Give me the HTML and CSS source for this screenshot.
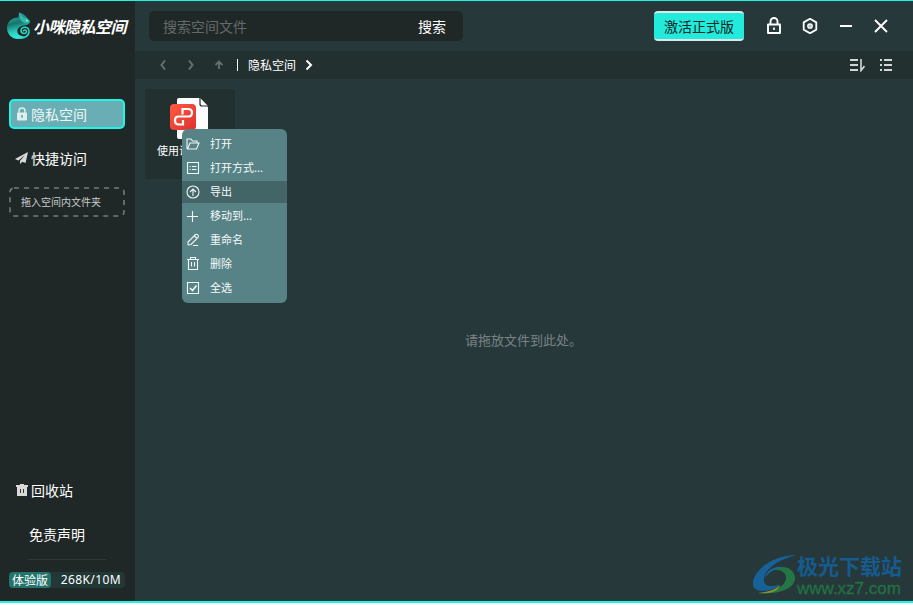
FILE: index.html
```html
<!DOCTYPE html>
<html lang="zh-CN">
<head>
<meta charset="utf-8">
<title>小咪隐私空间</title>
<link rel="stylesheet" href="styles.css">
</head>
<body>
<div class="window">
  <aside class="sidebar">
    <div class="brand">
      <svg class="brand-mark" width="24" height="28" viewBox="0 0 24 28">
        <defs><linearGradient id="g" gradientUnits="userSpaceOnUse" x1="6" y1="3" x2="12" y2="27"><stop offset="0" stop-color="#2aa99d"/><stop offset=".35" stop-color="#17756d"/><stop offset=".7" stop-color="#2bd2c2"/><stop offset="1" stop-color="#35f0dd"/></linearGradient></defs>
        <path fill="url(#g)" d="M11.500 5.500 12 .5c3 1 6 2.500 8 5l3.300 3.500c0 2-2 3.800-5 4.200-5 .3-8 2.800-8 6 0 2.500 2 4.500 5 4.800l2 1c-2 1.500-4 2-6 2C4.500 27 0 22 0 16 0 10 4.500 5.500 11.500 5.500z"/>
        <path d="M11 25.500c6 1.500 11-1.500 11-6 0-5-7.500-5.800-8-1 0 3.500 5.500 4 5.500 1 0-2.300-3.200-2-3 0" fill="none" stroke="#2bdccb" stroke-width="1.500"/>
        <path d="M12.500 2 16 5l4 1.500 3 3c-1 2-5 2.500-7.500.5-2-1.500-3-4-3-8z" fill="#2fb9ad"/>
        <circle cx="20" cy="8.500" r=".8" fill="#e8ffff"/>
      </svg>
      <span class="brand-name">小咪隐私空间</span>
    </div>
    <nav class="nav">
      <div class="nav-item active">
        <svg width="12" height="14" viewBox="0 0 12 14"><path d="M3 6V4a3 3 0 0 1 6 0v2" fill="none" stroke="#e1eeee" stroke-width="1.500"/><rect x="1" y="5.500" width="10" height="8" rx="1" fill="#e1eeee"/><path d="M6 8v3M5 9h2" stroke="#69aeb4" stroke-width="1.300"/></svg>
        <span>隐私空间</span>
      </div>
      <div class="nav-item quick">
        <svg width="14" height="14" viewBox="0 0 14 14"><path d="M13 1 0 8l3.500 1.500L10 4 5 10v3l2.300-2.200L10.500 12z" fill="#d9d9d9"/></svg>
        <span>快捷访问</span>
      </div>
      <div class="drop-folder">
        <svg class="dash" width="116" height="30"><rect x="1" y="1" width="114" height="28" rx="4" fill="none" stroke="#737a79" stroke-width="1.600" stroke-dasharray="5 5"/></svg>
        <span>拖入空间内文件夹</span>
      </div>
    </nav>
    <div class="side-bottom">
      <div class="nav-item trash">
        <svg width="12" height="12" viewBox="0 0 12 12"><path d="M0 1h4V0h4v1h4v2H0zM1 3h10v9H1z" fill="#d9d9d9"/><path d="M4.500 5v4M7.500 5v4" stroke="#303838"/></svg>
        <span>回收站</span>
      </div>
      <div class="legal">免责声明</div>
      <div class="rule"></div>
      <div class="quota"><span class="tier">体验版</span><span class="usage">268K/10M</span></div>
    </div>
  </aside>
  <main class="main">
    <header class="topbar">
      <div class="search"><span class="placeholder">搜索空间文件</span><span class="search-btn">搜索</span></div>
      <button class="activate">激活正式版</button>
      <div class="controls">
        <svg width="16" height="18" viewBox="0 0 16 18"><path d="M4.500 7V4.500a3.500 3.500 0 0 1 7 0V7M2 7.500h12v8.500H2z" fill="none" stroke="#fff" stroke-width="1.900" stroke-linejoin="round"/><path d="M8 10.500v2.500" stroke="#fff" stroke-width="1.700"/></svg>
        <svg width="16" height="18" viewBox="0 0 16 18"><path d="m8 1.800 6.300 3.600v7.200L8 16.200l-6.300-3.600V5.400z" fill="none" stroke="#fff" stroke-width="1.800" stroke-linejoin="round"/><circle cx="8" cy="9" r="2.200" fill="#aebabb" stroke="#fff" stroke-width="1.300"/></svg>
        <svg width="12" height="18" viewBox="0 0 12 18"><path d="M0 9h12" stroke="#fff" stroke-width="2"/></svg>
        <svg width="14" height="18" viewBox="0 0 14 18"><path d="m1 3 12 12M13 3 1 15" stroke="#fff" stroke-width="1.900"/></svg>
      </div>
    </header>
    <div class="pathbar">
      <div class="arrows">
        <svg width="6" height="10" viewBox="0 0 6 10"><path d="M5 .5 1.500 5 5 9.500" fill="none" stroke="#667070" stroke-width="2"/></svg>
        <svg width="6" height="10" viewBox="0 0 6 10"><path d="M1 .5 4.500 5 1 9.500" fill="none" stroke="#667070" stroke-width="2"/></svg>
        <svg width="8" height="10" viewBox="0 0 8 10"><path d="M4 9V2M.5 5 4 1.500 7.500 5" fill="none" stroke="#667070" stroke-width="1.800"/></svg>
      </div>
      <div class="divider"></div>
      <span class="crumb">隐私空间</span>
      <svg class="crumb-arrow" width="8" height="12" viewBox="0 0 8 12"><path d="m1.500 1.500 4.500 4.500-4.500 4.500" fill="none" stroke="#fff" stroke-width="2"/></svg>
      <div class="views">
        <svg width="15" height="13" viewBox="0 0 15 13"><path d="M0 1h8M0 6h8M0 11h8" stroke="#d2d6d6" stroke-width="2"/><path d="M11 0v11.500l3.500-4.500" fill="none" stroke="#d2d6d6" stroke-width="1.600"/></svg>
        <svg width="12" height="13" viewBox="0 0 12 13"><path d="M0 1h2M4 1h8M0 6h2M4 6h8M0 11h2M4 11h8" stroke="#d2d6d6" stroke-width="2"/></svg>
      </div>
    </div>
    <section class="files">
      <div class="file">
        <svg class="file-icon" width="40" height="44" viewBox="0 0 40 44">
          <defs><linearGradient id="r" x1="0" y1="0" x2="1" y2="1"><stop offset="0" stop-color="#ff5a42"/><stop offset="1" stop-color="#df302e"/></linearGradient></defs>
          <path d="M9 1h21l8 9v30q0 2-2 2H9q-2 0-2-2V3q0-2 2-2z" fill="#fcfdff"/><path d="M30 1v6q0 2 2 2h6" fill="#fff" stroke="#202b2b" stroke-width="1.200"/>
          <rect y="7" width="26" height="26" rx="4" fill="url(#r)"/>
          <path d="M12.500 17.500V12H18q4 0 4 3.800T18 19.500H8.500Q5 19.500 5 23.500T9 27.500h4V23" fill="none" stroke="#fff" stroke-width="2.200"/>
        </svg>
        <span class="file-name">使用说</span>
        <ul class="menu">
          <li><svg viewBox="0 0 14 14"><path d="M1 12V2h4l1.500 2H11v2M1 12h9.500L13 6H4L1.500 12"/></svg>打开</li>
          <li><svg viewBox="0 0 14 14"><path d="M1.500 1.500h11v11h-11zM3.500 5.500h1.200M6 5.500h4.500M3.500 8.500h1.200M6 8.500h4.500"/></svg>打开方式...</li>
          <li class="hover"><svg viewBox="0 0 14 14"><circle cx="7" cy="7" r="6"/><path d="M7 11V4M4 7l3-3 3 3"/></svg>导出</li>
          <li><svg viewBox="0 0 14 14"><path d="M1 7.500h11M6.500 2v11"/></svg>移动到...</li>
          <li><svg viewBox="0 0 14 14"><path d="M7 12.500h5M2 12V9l7.500-7.500q1-.7 2 .2l.6.600q.8 1 0 2L5 11.500 2 12M8.500 3l2.500 2.500"/></svg>重命名</li>
          <li><svg viewBox="0 0 14 14"><path d="M1 2.500h12M4.500 2V.5h5V2M2.500 3v9.500h9V3M5.500 5v4.500M8.500 5v4.500"/></svg>删除</li>
          <li><svg viewBox="0 0 14 14"><path d="M1.500 1.500h11v11h-11z"/><path d="m4 7 2.500 2.500 4-5" stroke-width="1.600"/></svg>全选</li>
        </ul>
      </div>
      <p class="hint">请拖放文件到此处。</p>
      <div class="watermark">
        <svg width="44" height="42" viewBox="0 0 44 42">
          <path d="M0 31C-1 17 19 1 44 1 27 5 12 14 11 25c-1 7 7 9 16 5C22 37 2 41 0 31z" fill="#176199"/>
          <path d="M20 16c10-7 22-1 22 8 0 10-15 17-37 15 14-1 27-6 28-14 1-6-5-10-13-9z" fill="#247744"/>
          <path d="M5 39c9-1 17-3 22-8-2 7-10 9-22 8z" fill="#88902f"/>
          <path d="M12 24c1-8 12-14 20-10-8-1-16 4-20 10z" fill="#1b659a"/>
        </svg>
        <div class="wm-text"><b>极光下载站</b><span>www.xz7.com</span></div>
      </div>
    </section>
  </main>
</div>
</body>
</html>
```
FILE: styles.css
```css
* { box-sizing: border-box; }
body { margin: 0; background: #fff; font-family: "Noto Sans CJK SC", sans-serif; font-size: 14px; color: #fff; }
svg { display: block; flex: none; }
.window { width: 913px; height: 603px; display: flex; border-top: 1px solid #1ff5e5; border-bottom: 2px solid #1ff5e5; background: #27383b; }
.sidebar { width: 135px; background: #202827; display: flex; flex-direction: column; }
.brand { display: flex; align-items: center; height: 50px; padding-left: 7px; gap: 2px; }
.brand-name { font-size: 16px; font-weight: 700; font-style: italic; white-space: nowrap; line-height: 24px; letter-spacing: -.5px; }
.nav { padding: 48px 9px 0; }
.nav-item { height: 30px; width: 116px; display: flex; align-items: center; gap: 3px; line-height: 20px; white-space: nowrap; }
.active { background: #69aeb4; border: 2px solid #1ff5e5; border-radius: 5px; padding-left: 5px; color: #eef7f7; }
.quick { margin-top: 14px; padding-left: 6px; gap: 2px; }
.drop-folder { position: relative; margin-top: 14px; height: 30px; padding-left: 12px; font-size: 10px; line-height: 30px; color: #c9cccc; }
.dash { position: absolute; left: 0; top: 0; }
.side-bottom { margin-top: auto; padding: 0 9px 13px; }
.trash { padding-left: 7px; }
.legal { margin-top: 14px; height: 30px; line-height: 30px; padding-left: 20px; }
.rule { height: 1px; width: 78px; margin: 10px 0 12px 19px; background: #2b3938; }
.quota { display: flex; width: 116px; height: 16px; border-radius: 4px; background: #213836; line-height: 16px; font-size: 12px; }
.tier { width: 42px; text-align: center; border-radius: 4px; background: #24746c; }
.usage { flex: 1; text-align: right; padding-right: 4px; font-family: "Noto Sans", sans-serif; letter-spacing: .4px; }
.main { flex: 1; display: flex; flex-direction: column; min-width: 0; }
.topbar { height: 50px; display: flex; align-items: center; padding: 0 25px 0 14px; }
.search { width: 314px; height: 30px; border-radius: 5px; background: #202827; display: flex; justify-content: space-between; align-items: center; padding: 0 17px 0 14px; }
.placeholder { color: #636b6a; }
.activate { margin-left: 191px; width: 90px; height: 30px; border: 0; border-top: 2px solid #dce8e7; border-bottom: 2px solid #dce8e7; border-radius: 4px; padding: 0; background: #23ebdc; color: #142827; font: 14px "Noto Sans CJK SC", sans-serif; }
.controls { margin-left: auto; display: flex; align-items: center; }
.controls svg:nth-child(2) { margin-left: 20px; }
.controls svg:nth-child(3) { margin-left: 22px; }
.controls svg:nth-child(4) { margin-left: 22px; }
.pathbar { height: 28px; background: #233030; display: flex; align-items: center; padding: 0 21px 0 25px; font-size: 12px; }
.arrows { display: flex; gap: 22px; align-items: center; }
.arrows svg:last-child { margin-left: -1px; }
.divider { width: 1px; height: 12px; background: #fff; margin: 0 10px 0 14px; }
.crumb { line-height: 18px; padding-bottom: 1px; }
.crumb-arrow { margin-left: 9px; }
.views { margin-left: auto; display: flex; gap: 15px; }
.files { flex: 1; position: relative; padding: 10px; }
.file { position: relative; width: 90px; height: 90px; background: #233030; padding-top: 8px; }
.file-icon { margin-left: 25px; }
.file-name { display: block; margin: -1px 0 0 12px; font-size: 11px; line-height: 20px; white-space: nowrap; }
.menu { position: absolute; left: 37px; top: 40px; width: 105px; height: 174px; margin: 0; padding: 4px 0 2px; list-style: none; background: #578387; border-radius: 6px; font-size: 11px; }
.menu li { height: 24px; display: flex; align-items: center; gap: 10px; padding: 0 0 3px 4px; color: #f6f9f9; line-height: 21px; white-space: nowrap; }
.menu .hover { background: linear-gradient(#446568, #446568) 0 0 / 100% 22px no-repeat; }
.menu svg { width: 14px; height: 14px; fill: none; stroke: #f1f6f6; stroke-width: 1.1; }
.hint { margin: 151px 0 0; padding-left: 320px; font-size: 13px; line-height: 20px; color: #798385; }
.watermark { position: absolute; right: 10px; bottom: 3px; display: flex; align-items: center; }
.wm-text { display: flex; flex-direction: column; width: 106px; padding-top: 4px; white-space: nowrap; }
.wm-text b { color: #165b8e; font: 700 21px/24px "Liberation Sans", "Noto Sans CJK SC", sans-serif; }
.wm-text span { color: #217143; font: 17px/19px "Liberation Sans", sans-serif; -webkit-text-stroke: .3px #217143; }
```
